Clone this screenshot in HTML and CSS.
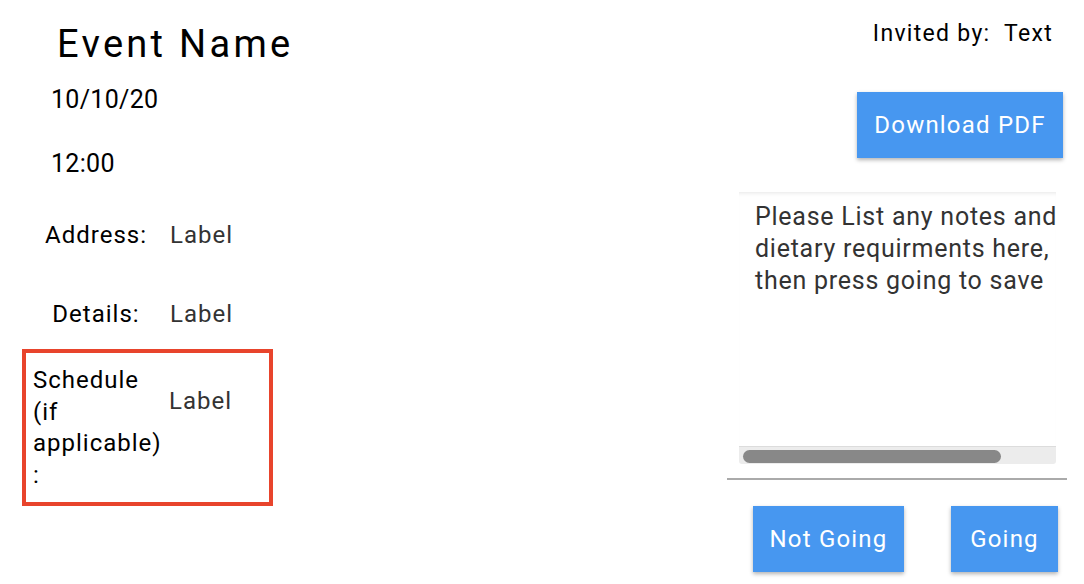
FILE: index.html
```html
<!DOCTYPE html>
<html>
<head>
<meta charset="utf-8">
<link rel="stylesheet" href="styles.css">
</head>
<body>
<div class="page">
  <section class="details">
    <h1 class="title">Event Name</h1>
    <div class="date">10/10/20</div>
    <div class="time">12:00</div>
    <div class="row row-address">
      <span class="key">Address:</span>
      <span class="val">Label</span>
    </div>
    <div class="row row-details">
      <span class="key">Details:</span>
      <span class="val">Label</span>
    </div>
    <div class="row schedule">
      <span class="key key-left">Schedule<br>(if<br>applicable)<br>:</span>
      <span class="val">Label</span>
    </div>
  </section>
  <section class="side">
    <div class="invited">Invited by:&nbsp; Text</div>
    <div class="dl-wrap"><button class="btn btn-dl">Download PDF</button></div>
    <div class="notes">
      <div class="notes-text">Please List any notes and<br>dietary requirments here,<br>then press going to save</div>
      <div class="scroll-track"><div class="scroll-thumb"></div></div>
    </div>
    <div class="divider"></div>
    <div class="actions">
      <button class="btn btn-not">Not Going</button>
      <button class="btn btn-go">Going</button>
    </div>
  </section>
</div>
</body>
</html>
```

FILE: styles.css
```css
html, body {
  margin: 0;
  padding: 0;
  background: #fff;
}
body {
  font-family: Roboto, "Liberation Sans", sans-serif;
  color: #000;
  width: 1084px;
  height: 584px;
  overflow: hidden;
}
.page {
  display: flex;
  justify-content: space-between;
  height: 584px;
}
.details {
  width: 300px;
  padding-left: 22px;
  display: flex;
  flex-direction: column;
  align-items: flex-start;
}
.title {
  font-weight: 400;
  font-size: 38px;
  line-height: 38px;
  margin: 25px 0 0 35px;
  letter-spacing: 3.3px;
}
.date {
  font-size: 25px;
  line-height: 30px;
  margin: 22px 0 0 29px;
  letter-spacing: 0.3px;
}
.time {
  font-size: 25px;
  line-height: 30px;
  margin: 34px 0 0 29px;
  letter-spacing: 0.3px;
}
.row {
  display: flex;
  align-items: flex-start;
  font-size: 24px;
  line-height: 30px;
  letter-spacing: 1px;
}
.key {
  width: 148px;
  text-align: center;
  flex-shrink: 0;
}
.val {
  color: #333;
}
.row-address {
  margin-top: 41px;
}
.row-details {
  margin-top: 49px;
}
.schedule {
  margin-top: 20px;
  width: 236px;
  border: 4px solid #e8442c;
  padding: 12px 0 11px 7px;
  line-height: 31.5px;
}
.key-left {
  text-align: left;
  width: 130px;
}
.schedule .val {
  margin-left: 6px;
  margin-top: 21px;
}

.side {
  width: 340px;
  margin-right: 17px;
  display: flex;
  flex-direction: column;
}
.invited {
  font-size: 23px;
  line-height: 28px;
  margin-top: 20px;
  text-align: right;
  padding-right: 14px;
  letter-spacing: 1.3px;
}
.btn {
  font-family: Roboto, "Liberation Sans", sans-serif;
  background: #4797f0;
  color: #fff;
  border: none;
  font-size: 24px;
  letter-spacing: 1.2px;
  height: 66px;
  padding: 0;
  box-shadow: 0 2px 4px rgba(0, 0, 0, 0.3);
}
.dl-wrap {
  display: flex;
  justify-content: flex-end;
  margin-top: 44px;
  padding-right: 4px;
}
.btn-dl {
  width: 206px;
}
.notes {
  margin: 34px 0 0 12px;
  width: 317px;
  height: 272px;
  display: flex;
  flex-direction: column;
  justify-content: space-between;
  box-shadow: inset 0 4px 4px -3px rgba(0, 0, 0, 0.1);
  overflow: hidden;
}
.notes-text {
  font-size: 25px;
  line-height: 32px;
  letter-spacing: 0.75px;
  color: #333;
  white-space: nowrap;
  padding: 9px 0 0 16px;
}
.scroll-track {
  height: 18px;
  background: #ececec;
  border-top: 1px solid #dcdcdc;
  box-sizing: border-box;
  padding: 3px 0 0 4px;
  border-radius: 0 0 3px 3px;
}
.scroll-thumb {
  width: 258px;
  height: 13px;
  border-radius: 7px;
  background: #888;
}
.divider {
  margin-top: 14px;
  height: 2px;
  background: #aaa;
}
.actions {
  display: flex;
  margin-top: 26px;
  padding-left: 26px;
  gap: 47px;
}
.btn-not {
  width: 151px;
}
.btn-go {
  width: 107px;
}
```
